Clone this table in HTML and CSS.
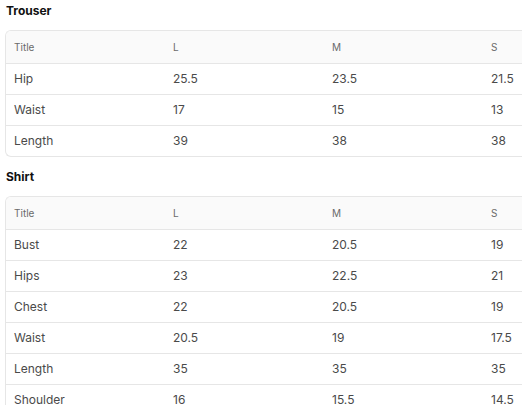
FILE: index.html
```html
<!DOCTYPE html>
<html>
<head>
<meta charset="utf-8">
<link rel="stylesheet" href="styles.css">
</head>
<body>
<div class="page">
  <section class="group">
    <h2 class="group-title">Trouser</h2>
    <div class="table-wrap">
      <table class="size-table">
        <thead>
          <tr><th>Title</th><th>L</th><th>M</th><th>S</th></tr>
        </thead>
        <tbody>
          <tr><td>Hip</td><td>25.5</td><td>23.5</td><td>21.5</td></tr>
          <tr><td>Waist</td><td>17</td><td>15</td><td>13</td></tr>
          <tr><td>Length</td><td>39</td><td>38</td><td>38</td></tr>
        </tbody>
      </table>
    </div>
  </section>
  <section class="group">
    <h2 class="group-title">Shirt</h2>
    <div class="table-wrap">
      <table class="size-table">
        <thead>
          <tr><th>Title</th><th>L</th><th>M</th><th>S</th></tr>
        </thead>
        <tbody>
          <tr><td>Bust</td><td>22</td><td>20.5</td><td>19</td></tr>
          <tr><td>Hips</td><td>23</td><td>22.5</td><td>21</td></tr>
          <tr><td>Chest</td><td>22</td><td>20.5</td><td>19</td></tr>
          <tr><td>Waist</td><td>20.5</td><td>19</td><td>17.5</td></tr>
          <tr><td>Length</td><td>35</td><td>35</td><td>35</td></tr>
          <tr><td>Shoulder</td><td>16</td><td>15.5</td><td>14.5</td></tr>
        </tbody>
      </table>
    </div>
  </section>
</div>
</body>
</html>
```
FILE: styles.css
```css
html, body {
  margin: 0;
  padding: 0;
  background: #ffffff;
  overflow: hidden;
}
body {
  font-family: Inter, "Liberation Sans", sans-serif;
  color: #333333;
}
.page {
  padding: 0 0 0 5px;
  display: flex;
  flex-direction: column;
  gap: 9px;
}
.group {
  display: flex;
  flex-direction: column;
  gap: 8px;
}
.group-title {
  margin: 0;
  font-size: 12px;
  line-height: 22px;
  font-weight: 700;
  color: #111111;
  padding-left: 1px;
}
.table-wrap {
  width: 636px;
  border: 1px solid #e6e6e6;
  border-right: none;
  border-radius: 6px 0 0 6px;
  overflow: hidden;
}
.size-table {
  width: 636px;
  border-collapse: collapse;
  table-layout: fixed;
}
.size-table th,
.size-table td {
  box-sizing: border-box;
  text-align: left;
  padding: 0 8px;
  width: 159px;
}
.size-table th {
  height: 32px;
  background: #fafafa;
  font-size: 10px;
  font-weight: 400;
  color: #6a6a6a;
  border-bottom: 1px solid #e6e6e6;
}
.size-table td {
  height: 31px;
  font-size: 12px;
  color: #4a4a4a;
  border-bottom: 1px solid #e6e6e6;
}
.size-table tbody tr:last-child td {
  border-bottom: none;
}
```
